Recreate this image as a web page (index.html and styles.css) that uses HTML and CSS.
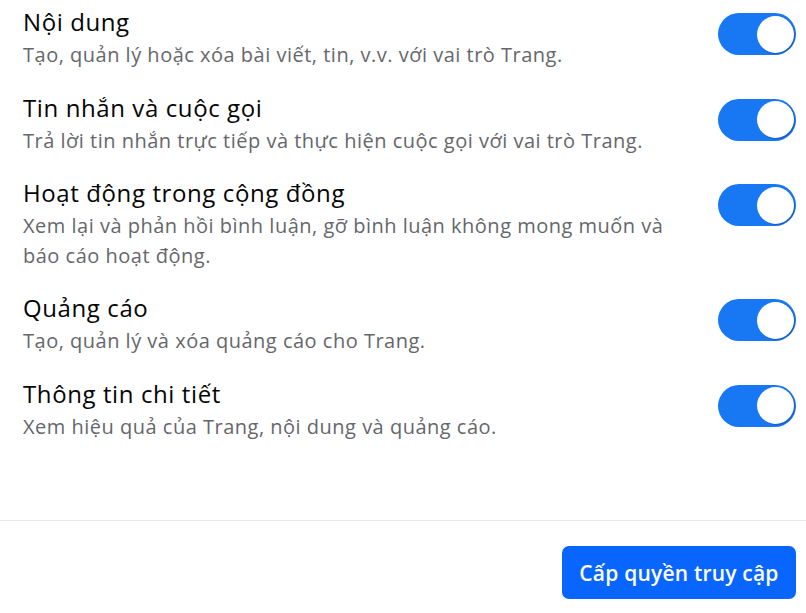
FILE: index.html
```html
<!DOCTYPE html>
<html lang="vi">
<head>
<meta charset="utf-8">
<link rel="stylesheet" href="styles.css">
</head>
<body>
<div class="panel">
  <div class="list">
    <div class="row">
      <div class="text">
        <div class="title">Nội dung</div>
        <div class="desc">Tạo, quản lý hoặc xóa bài viết, tin, v.v. với vai trò Trang.</div>
      </div>
      <div class="toggle"><span class="knob"></span></div>
    </div>
    <div class="row">
      <div class="text">
        <div class="title">Tin nhắn và cuộc gọi</div>
        <div class="desc">Trả lời tin nhắn trực tiếp và thực hiện cuộc gọi với vai trò Trang.</div>
      </div>
      <div class="toggle"><span class="knob"></span></div>
    </div>
    <div class="row">
      <div class="text">
        <div class="title">Hoạt động trong cộng đồng</div>
        <div class="desc">Xem lại và phản hồi bình luận, gỡ bình luận không mong muốn và báo cáo hoạt động.</div>
      </div>
      <div class="toggle"><span class="knob"></span></div>
    </div>
    <div class="row">
      <div class="text">
        <div class="title">Quảng cáo</div>
        <div class="desc">Tạo, quản lý và xóa quảng cáo cho Trang.</div>
      </div>
      <div class="toggle"><span class="knob"></span></div>
    </div>
    <div class="row">
      <div class="text">
        <div class="title">Thông tin chi tiết</div>
        <div class="desc">Xem hiệu quả của Trang, nội dung và quảng cáo.</div>
      </div>
      <div class="toggle"><span class="knob"></span></div>
    </div>
  </div>
  <div class="footer">
    <button class="primary">Cấp quyền truy cập</button>
  </div>
</div>
</body>
</html>
```
FILE: styles.css
```css
html, body {
  margin: 0;
  padding: 0;
  background: #ffffff;
}
body {
  font-family: "Open Sans", "Noto Sans", sans-serif;
  color: #050505;
}
.panel {
  width: 806px;
  height: 613px;
  display: flex;
  flex-direction: column;
}
.list {
  height: 513px;
  padding: 7px 10px 0 23px;
  border-bottom: 1px solid #ebebeb;
  box-sizing: content-box;
}
.row {
  display: flex;
  align-items: flex-start;
  gap: 24px;
  padding-bottom: 23px;
}
.text {
  flex: 1;
  min-width: 0;
}
.title {
  font-size: 24px;
  line-height: 30px;
  font-weight: 500;
  letter-spacing: 0.6px;
  color: #050505;
}
.desc {
  margin-top: 3px;
  font-size: 20px;
  line-height: 29.5px;
  letter-spacing: 0.5px;
  color: #65676b;
}
.toggle {
  flex: none;
  width: 78px;
  height: 42px;
  margin-top: 6px;
  border-radius: 21px;
  background: #1877f2;
  position: relative;
}
.knob {
  position: absolute;
  right: 2px;
  top: 2.5px;
  width: 37px;
  height: 37px;
  border-radius: 50%;
  background: #ffffff;
  box-shadow: 1px 1px 1px rgba(0, 40, 120, 0.35);
}
.footer {
  display: flex;
  justify-content: flex-end;
  padding: 25px 10px 0 0;
}
.primary {
  width: 234px;
  height: 53px;
  border: none;
  border-radius: 7px;
  background: #0866ff;
  color: #ffffff;
  font-family: "Open Sans", "Noto Sans", sans-serif;
  font-size: 21px;
  font-weight: 600;
  letter-spacing: 0.2px;
  padding: 0;
}
```
